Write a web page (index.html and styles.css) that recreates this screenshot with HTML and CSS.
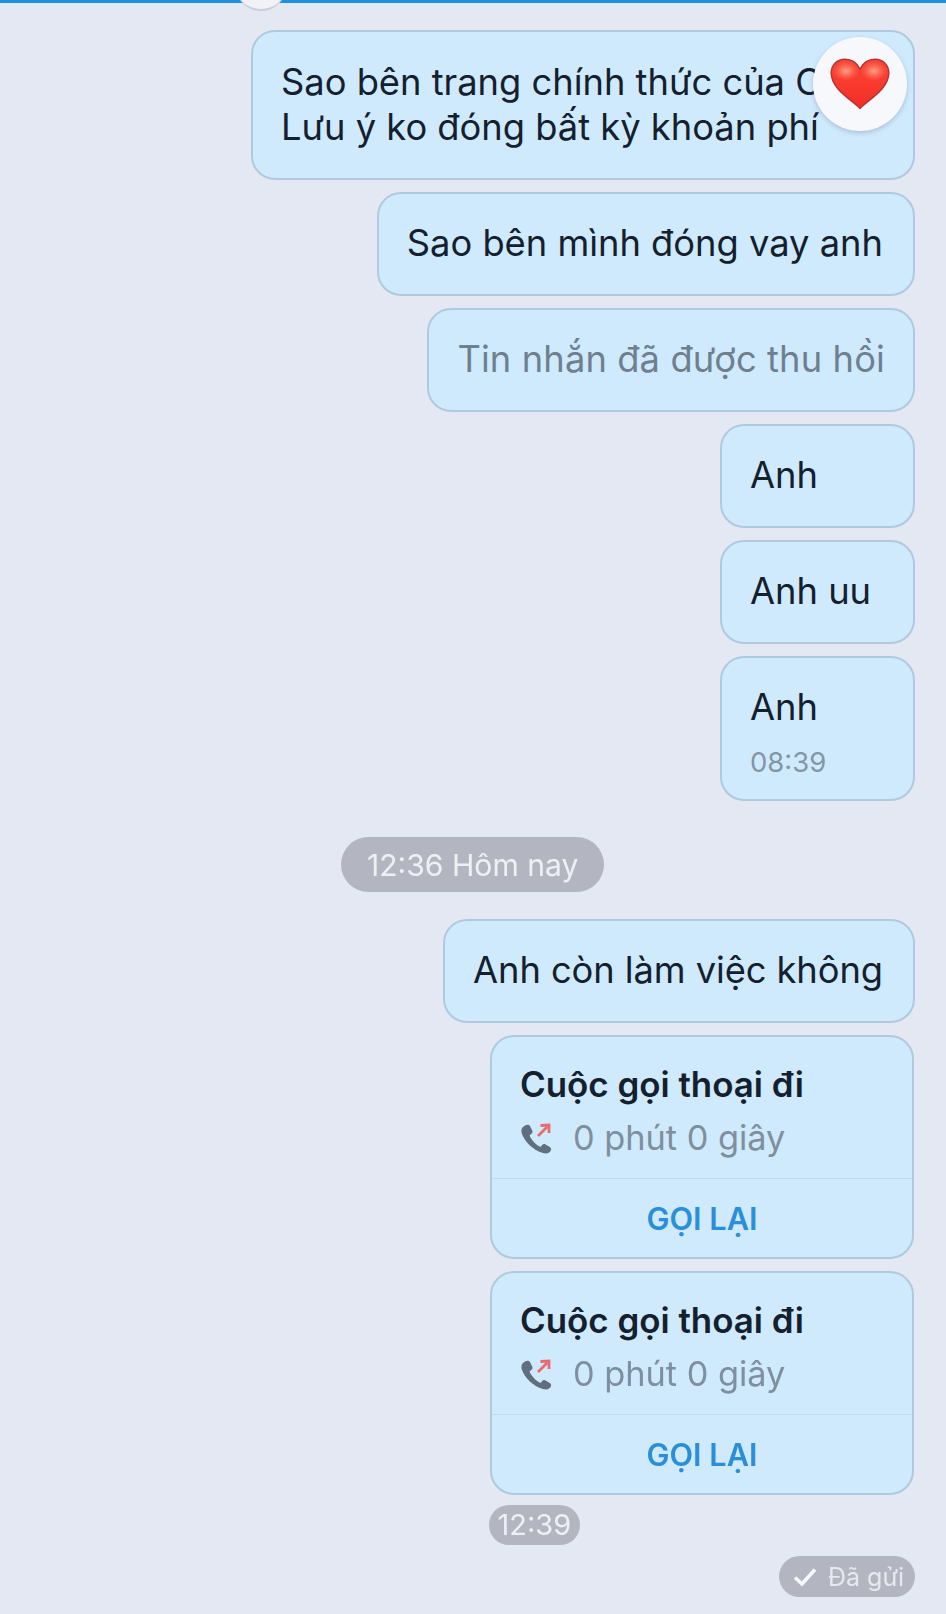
FILE: index.html
```html
<!DOCTYPE html>
<html lang="vi">
<head>
<meta charset="utf-8">
<title>Tin nhắn</title>
<link rel="stylesheet" href="styles.css">
</head>
<body>
<div class="topbar"></div>
<div class="seen-avatar"></div>
<main class="chat">
  <div class="bubble first">
    <div class="text">Sao bên trang chính thức của C<br>Lưu ý ko đóng bất kỳ khoản phí</div>
    <div class="reaction">
      <svg width="60" height="52" viewBox="0 0 60 52" aria-hidden="true">
        <defs>
          <linearGradient id="heart" x1="0" y1="0" x2="0" y2="1">
            <stop offset="0" stop-color="#f6463a"/>
            <stop offset="0.5" stop-color="#fb3a2e"/>
            <stop offset="1" stop-color="#ee2c26"/>
          </linearGradient>
          <radialGradient id="lobe">
            <stop offset="0" stop-color="#ffb08e" stop-opacity="0.9"/>
            <stop offset="1" stop-color="#ff7a62" stop-opacity="0"/>
          </radialGradient>
        </defs>
        <path d="M30 50.500 C24 43 1.200 32 1.200 15 C1.200 6 8 1.200 15 1.200 C22 1.200 27 5 30 11 C33 5 38 1.200 45 1.200 C52 1.200 58.800 6 58.800 15 C58.800 32 36 43 30 50.500 Z" fill="url(#heart)" stroke="#b5322f" stroke-width="1.400"/>
        <ellipse cx="16" cy="13" rx="13" ry="10" fill="url(#lobe)"/>
        <ellipse cx="44" cy="13" rx="13" ry="10" fill="url(#lobe)"/>
      </svg>
    </div>
  </div>
  <div class="bubble single"><div class="text">Sao bên mình đóng vay anh</div></div>
  <div class="bubble single recalled-bubble"><div class="text recalled">Tin nhắn đã được thu hồi</div></div>
  <div class="bubble single short"><div class="text">Anh</div></div>
  <div class="bubble single short"><div class="text">Anh uu</div></div>
  <div class="bubble short timed">
    <div class="text">Anh</div>
    <div class="time">08:39</div>
  </div>
  <div class="pill-row"><span class="pill day">12:36 Hôm nay</span></div>
  <div class="bubble single tight"><div class="text">Anh còn làm việc không</div></div>
  <div class="bubble call">
    <div class="call-body">
      <div class="call-title">Cuộc gọi thoại đi</div>
      <div class="call-meta">
        <svg class="call-icon" width="32" height="32" viewBox="0 0 32 32" aria-hidden="true">
          <path d="M5 3.500 C2 5 0.500 8 2 12 C5 20 13 28 23 31 C27 32 30 31 31 28 C31.500 26.500 30.500 25.500 29 24.500 L25.500 22.500 C24 21.800 23 22 22 23.200 L20.500 25 C16 23 11.500 18 9.500 13.500 L11.500 11.800 C12.800 10.800 12.800 9.800 12.200 8.500 L10 4 C9 2.500 7 2.500 5 3.500 Z" fill="#5f6f80"/>
          <path d="M18 14 L27 5 M20.500 3.500 L29 3 L29 11" fill="none" stroke="#ea6a6e" stroke-width="2.800"/>
        </svg>
        <span>0 phút 0 giây</span>
      </div>
    </div>
    <div class="call-action">GỌI LẠI</div>
  </div>
  <div class="bubble call">
    <div class="call-body">
      <div class="call-title">Cuộc gọi thoại đi</div>
      <div class="call-meta">
        <svg class="call-icon" width="32" height="32" viewBox="0 0 32 32" aria-hidden="true">
          <path d="M5 3.500 C2 5 0.500 8 2 12 C5 20 13 28 23 31 C27 32 30 31 31 28 C31.500 26.500 30.500 25.500 29 24.500 L25.500 22.500 C24 21.800 23 22 22 23.200 L20.500 25 C16 23 11.500 18 9.500 13.500 L11.500 11.800 C12.800 10.800 12.800 9.800 12.200 8.500 L10 4 C9 2.500 7 2.500 5 3.500 Z" fill="#5f6f80"/>
          <path d="M18 14 L27 5 M20.500 3.500 L29 3 L29 11" fill="none" stroke="#ea6a6e" stroke-width="2.800"/>
        </svg>
        <span>0 phút 0 giây</span>
      </div>
    </div>
    <div class="call-action">GỌI LẠI</div>
  </div>
  <div class="pill-row time-row"><span class="pill clock">12:39</span></div>
  <div class="status-row">
    <span class="pill sent">
      <svg width="24" height="20" viewBox="0 0 24 20" aria-hidden="true">
        <path d="M2 10.500 L9 17 L22 2.500" fill="none" stroke="#f6f8fb" stroke-width="3.600"/>
      </svg>
      Đã gửi
    </span>
  </div>
</main>
</body>
</html>
```
FILE: styles.css
```css
* {
  box-sizing: border-box;
}

html,
body {
  margin: 0;
  height: 1614px;
  overflow: hidden;
}

body {
  background: #e4e8f3;
  font-family: Inter, "Liberation Sans", Arial, sans-serif;
  color: #14202e;
  position: relative;
}

.topbar {
  height: 3px;
  background: #1f8fe0;
}

.seen-avatar {
  position: absolute;
  top: -38px;
  left: 236px;
  width: 50px;
  height: 49px;
  border-radius: 50%;
  background: #f0f2f8;
  border-bottom: 2px solid #c9ced8;
}

.chat {
  display: flex;
  flex-direction: column;
  align-items: flex-end;
  padding: 27px 31px 0 0;
  gap: 12px;
  filter: blur(0.4px);
}

.bubble {
  position: relative;
  background: #d0eafd;
  border: 2px solid #afcade;
  border-radius: 24px;
  font-size: 36.300px;
  line-height: 45px;
}

.single {
  height: 104px;
  padding: 0 30px 2px 28px;
  display: flex;
  align-items: center;
}

.recalled-bubble {
  padding-right: 28px;
}

.tight {
  letter-spacing: -0.08px;
}

.short {
  width: 195px;
}

.first {
  width: 664px;
  height: 150px;
  padding: 28px 0 0 28px;
  white-space: nowrap;
}

.timed {
  height: 145px;
  padding: 27px 0 0 28px;
}

.recalled {
  color: #6e808f;
  letter-spacing: 0.12px;
}

.time {
  font-size: 27.500px;
  line-height: 34px;
  margin-top: 15px;
  color: #8395a6;
}

.reaction {
  position: absolute;
  top: 5px;
  right: 6px;
  width: 94px;
  height: 94px;
  border-radius: 50%;
  background: #f6f8fc;
  box-shadow: 0 2px 5px rgba(90, 100, 120, 0.3);
  display: flex;
  align-items: center;
  justify-content: center;
}

.pill-row {
  align-self: flex-start;
}

.pill {
  display: inline-flex;
  align-items: center;
  background: #b3b6c1;
  color: #eef0f5;
  border-radius: 28px;
}

.day {
  margin: 24px 0 15px 341px;
  height: 55px;
  padding: 0 26px;
  font-size: 30.100px;
}

.clock {
  height: 40px;
  margin-left: 489px;
  padding: 0 8.500px 2px;
  font-size: 29px;
}

.time-row {
  margin-top: -2px;
}

.call {
  width: 424px;
  height: 224px;
  margin-right: 1px;
}

.call-body {
  height: 142px;
  padding: 27px 0 0 28px;
  border-bottom: 1px solid #bfd9ec;
}

.call-title {
  font-size: 34.900px;
  font-weight: 600;
  line-height: 40px;
}

.call-meta {
  display: flex;
  align-items: center;
  gap: 21px;
  margin-top: 14px;
  font-size: 34.300px;
  line-height: 40px;
  color: #7e8fa0;
}

.call-action {
  text-align: center;
  font-size: 30.700px;
  font-weight: 600;
  color: #2a8fd8;
  line-height: 80px;
}

.status-row {
  margin-top: -1px;
}

.sent {
  height: 41px;
  padding: 0 11px 0 14px;
  gap: 11px;
  font-size: 25px;
  color: #e6e9ef;
}
```
